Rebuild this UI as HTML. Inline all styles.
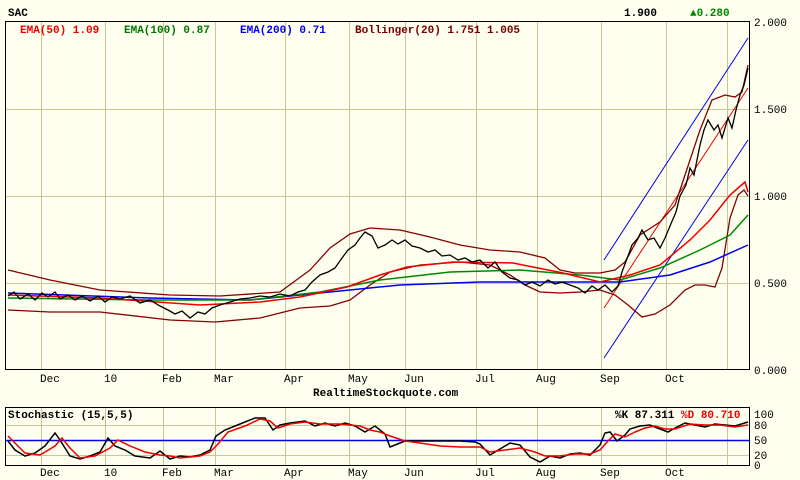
<!DOCTYPE html>
<html><head><style>
body{margin:0;background:#fffff0;}
svg{display:block;font-family:"Liberation Mono",monospace;font-size:11px;}
</style></head><body>
<svg width="800" height="480" viewBox="0 0 800 480">
<rect width="800" height="480" fill="#fffff0"/>
<g stroke="#c8c896" stroke-width="1">
<line x1="41.5" y1="21" x2="41.5" y2="370"/><line x1="105.5" y1="21" x2="105.5" y2="370"/><line x1="163.5" y1="21" x2="163.5" y2="370"/><line x1="215.5" y1="21" x2="215.5" y2="370"/><line x1="285.5" y1="21" x2="285.5" y2="370"/><line x1="349.5" y1="21" x2="349.5" y2="370"/><line x1="405.5" y1="21" x2="405.5" y2="370"/><line x1="476.5" y1="21" x2="476.5" y2="370"/><line x1="537.5" y1="21" x2="537.5" y2="370"/><line x1="601.5" y1="21" x2="601.5" y2="370"/><line x1="666.5" y1="21" x2="666.5" y2="370"/><line x1="727.5" y1="21" x2="727.5" y2="370"/>
<line x1="5" y1="109.5" x2="750" y2="109.5"/><line x1="5" y1="196.5" x2="750" y2="196.5"/><line x1="5" y1="283.5" x2="750" y2="283.5"/>
</g>
<rect x="5.5" y="21.5" width="744" height="348" fill="none" stroke="#000"/>
<text x="8" y="16" font-weight="bold">SAC</text>
<text x="20" y="33" fill="#e00" font-weight="bold">EMA(50) 1.09</text>
<text x="124" y="33" fill="#070" font-weight="bold">EMA(100) 0.87</text>
<text x="240" y="33" fill="#00e" font-weight="bold">EMA(200) 0.71</text>
<text x="355" y="33" fill="#700" font-weight="bold">Bollinger(20) 1.751 1.005</text>
<text x="624" y="16" font-weight="bold">1.900</text>
<text x="690" y="16" fill="#080" font-weight="bold">▲0.280</text>
<g font-size="11"><text x="754" y="26">2.000</text><text x="754" y="113">1.500</text><text x="754" y="200">1.000</text><text x="754" y="287">0.500</text><text x="754" y="374">0.000</text></g>
<line x1="604" y1="260" x2="748" y2="38" stroke="#00e"/>
<line x1="604" y1="358" x2="748" y2="140" stroke="#00e"/>
<line x1="604" y1="308" x2="748" y2="88" stroke="#e00"/>
<polyline fill="none" stroke="#800" stroke-width="1.3" points="8,270 50,280 100,290 170,295 220,296 280,292 310,270 330,248 350,234 370,228 400,230 430,237 460,245 490,250 520,252 545,258 560,270 575,273 600,273 615,270 625,262 640,235 660,222 675,205 690,160 700,130 712,100 725,95 735,97 742,92 748,65"/>
<polyline fill="none" stroke="#800" stroke-width="1.3" points="8,310 50,312 100,312 170,320 215,322 260,318 300,308 330,306 350,300 370,285 390,272 420,265 460,262 490,265 510,275 525,285 540,292 560,293 580,292 600,290 615,295 628,305 642,317 655,314 670,305 685,290 695,285 705,285 715,287 722,268 730,218 738,195 744,190 748,196"/>
<polyline fill="none" stroke="#00e" stroke-width="1.5" points="8,293 150,298 250,300 320,293 400,285 480,282 560,282 620,282 670,275 710,262 748,245"/>
<polyline fill="none" stroke="#080" stroke-width="1.5" points="8,298 150,300 250,300 320,292 380,280 450,272 520,270 580,275 620,280 660,268 700,250 730,235 748,215"/>
<polyline fill="none" stroke="#e00" stroke-width="1.5" points="8,295 100,298 200,305 260,302 300,297 347,287 380,275 407,267 453,262 513,263 563,273 600,282 630,275 660,265 690,240 710,220 730,195 745,182 748,192"/>
<polyline fill="none" stroke="#000" stroke-width="1.3" points="8,296 14,292 20,299 28,294 35,300 42,293 48,297 55,292 60,299 68,295 75,300 82,296 90,301 98,296 105,302 112,297 120,299 130,296 140,303 150,300 160,306 168,310 175,314 182,311 190,318 198,312 205,314 212,308 220,305 230,302 240,299 250,298 260,296 270,297 280,294 290,296 298,292 305,290 312,282 320,275 328,272 335,268 342,258 348,250 355,245 360,238 365,232 372,236 378,248 385,245 392,240 398,244 405,240 412,246 420,248 428,252 435,250 442,256 450,255 458,260 465,258 472,262 480,260 488,268 495,262 502,272 510,278 518,280 525,285 532,282 540,286 548,280 555,284 562,282 570,285 578,288 585,293 592,286 598,290 605,285 612,292 618,286 622,272 628,256 632,245 638,238 642,230 648,240 654,238 660,248 665,238 670,226 676,212 680,196 686,185 690,168 694,175 700,145 704,130 708,120 714,130 718,125 722,138 728,118 732,128 736,110 740,95 744,85 748,68"/>
<g font-size="11"><text x="40" y="382">Dec</text><text x="104" y="382">10</text><text x="162" y="382">Feb</text><text x="214" y="382">Mar</text><text x="284" y="382">Apr</text><text x="348" y="382">May</text><text x="404" y="382">Jun</text><text x="475" y="382">Jul</text><text x="536" y="382">Aug</text><text x="600" y="382">Sep</text><text x="665" y="382">Oct</text></g>
<text x="313" y="396" font-weight="bold">RealtimeStockquote.com</text>
<g stroke="#c8c896"><line x1="41.5" y1="407" x2="41.5" y2="465"/><line x1="105.5" y1="407" x2="105.5" y2="465"/><line x1="163.5" y1="407" x2="163.5" y2="465"/><line x1="215.5" y1="407" x2="215.5" y2="465"/><line x1="285.5" y1="407" x2="285.5" y2="465"/><line x1="349.5" y1="407" x2="349.5" y2="465"/><line x1="405.5" y1="407" x2="405.5" y2="465"/><line x1="476.5" y1="407" x2="476.5" y2="465"/><line x1="537.5" y1="407" x2="537.5" y2="465"/><line x1="601.5" y1="407" x2="601.5" y2="465"/><line x1="666.5" y1="407" x2="666.5" y2="465"/><line x1="727.5" y1="407" x2="727.5" y2="465"/>
<line x1="5" y1="425.5" x2="750" y2="425.5"/><line x1="5" y1="455.5" x2="750" y2="455.5"/></g>
<line x1="5" y1="440.5" x2="750" y2="440.5" stroke="#00e" stroke-width="1.5"/>
<rect x="5.5" y="407.5" width="744" height="58" fill="none" stroke="#000"/>
<polyline fill="none" stroke="#000" stroke-width="1.5" points="8,441 15,450 25,456 35,453 45,446 55,433 60,440 70,456 80,459 90,456 100,452 108,438 115,446 125,450 135,456 150,458 160,451 170,459 180,456 190,457 200,455 210,450 216,436 225,430 240,424 255,418 265,418 273,430 280,425 290,423 305,421 315,426 325,423 335,426 345,423 355,426 365,432 375,426 385,434 390,447 405,441 415,441 425,441 440,441 460,441 475,442 480,444 490,455 500,449 510,443 520,445 530,457 540,462 550,456 560,458 570,454 580,453 590,455 600,445 605,433 610,432 617,441 625,435 630,429 640,426 650,425 660,429 668,432 675,428 685,423 695,425 705,427 715,424 725,425 735,426 748,422"/>
<polyline fill="none" stroke="#e00" stroke-width="1.5" points="8,436 25,453 40,455 55,446 62,438 70,448 80,458 95,456 110,448 118,440 130,446 145,452 160,455 170,456 180,458 190,457 200,456 210,452 218,444 228,432 245,426 260,419 270,421 278,428 290,424 305,422 320,424 340,424 360,426 370,430 380,432 390,436 405,441 420,443 440,446 460,447 480,447 490,452 505,450 520,448 535,452 545,456 560,456 575,454 590,454 600,450 608,441 615,434 625,437 635,432 645,428 655,426 665,429 675,429 690,424 705,425 720,425 735,427 748,425"/>
<text x="8" y="418" font-weight="bold">Stochastic (15,5,5)</text>
<text x="615" y="418" font-weight="bold">%K 87.311 <tspan fill="#e00">%D 80.710</tspan></text>
<g font-size="11"><text x="754" y="418">100</text><text x="754" y="429">80</text><text x="754" y="444">50</text><text x="754" y="459">20</text><text x="754" y="469">0</text></g>
<g font-size="11"><text x="40" y="476">Dec</text><text x="104" y="476">10</text><text x="162" y="476">Feb</text><text x="214" y="476">Mar</text><text x="284" y="476">Apr</text><text x="348" y="476">May</text><text x="404" y="476">Jun</text><text x="475" y="476">Jul</text><text x="536" y="476">Aug</text><text x="600" y="476">Sep</text><text x="665" y="476">Oct</text></g>
</svg>
</body></html>
